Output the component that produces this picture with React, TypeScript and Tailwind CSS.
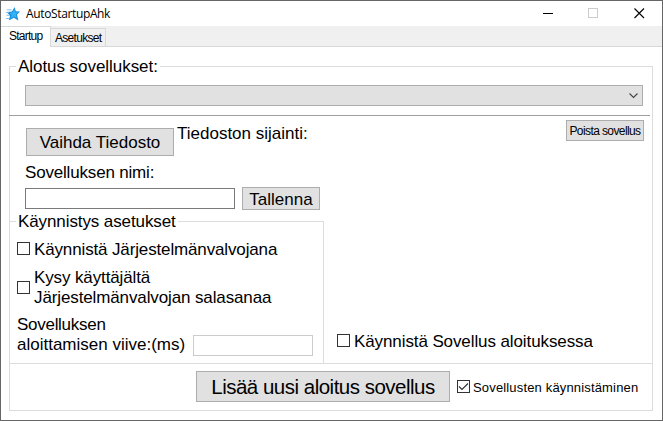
import type { ReactNode } from 'react';

function Text({ children, className = '' }: { children: ReactNode; className?: string }) {
  return <span className={`block whitespace-nowrap ${className}`}>{children}</span>;
}

function Button({ children, className = '' }: { children: ReactNode; className?: string }) {
  return (
    <button
      className={`flex shrink-0 items-center justify-center whitespace-nowrap border border-[#adadad] bg-[#e1e1e1] ${className}`}
    >
      {children}
    </button>
  );
}

function CheckBox({ checked = false, className = '' }: { checked?: boolean; className?: string }) {
  return (
    <span className={`block size-[13px] shrink-0 border border-[#333] bg-white ${className}`}>
      {checked && (
        <svg viewBox="0 0 11 11" className="size-[11px]" fill="none" stroke="#333" strokeWidth="1.2">
          <path d="M1 5.5 L4 8.5 L10 2.5" />
        </svg>
      )}
    </span>
  );
}

function Legend({ children, className = '' }: { children: ReactNode; className: string }) {
  return (
    <div className="flex h-[19px] items-center">
      <div className="h-px w-[7px] bg-[#dcdcdc]" />
      <Text className={`pl-[2px] text-[17px] leading-[19px] ${className}`}>{children}</Text>
      <div className="h-px flex-1 bg-[#dcdcdc]" />
    </div>
  );
}

function TitleBar() {
  return (
    <div className="flex h-[25px] shrink-0 items-center">
      <svg viewBox="0 0 14 14" className="ml-[5px] size-[14px]">
        <path d="M8.6 0 L9.8 4.2 L14 4.6 L11 7.8 L12.4 13.4 L7.8 10.8 L2.8 13.6 L4 8.8 L0.8 5 L6 4.4 Z" fill="#1a8fdc" />
        <path d="M8.4 2.2 L9 5.2 L12.2 5.6 L9.8 7.5 L10.6 11 L7.6 9.4 L4.6 11.4 L5.6 8.1 L3.6 5.9 L6.8 5.4 Z" fill="#35b2f5" />
        <path d="M1 2.8 H5.5 M0 5.5 H3 M0.5 8.3 H4 M0 11.5 H3.2" stroke="#6dbdeb" strokeWidth="0.9" />
      </svg>
      <Text className="ml-[6px] w-[88px] font-['Open_Sans',sans-serif] text-[12px] leading-[24px] tracking-[-0.36px]">
        AutoStartupAhk
      </Text>
      <svg viewBox="0 0 102 11" className="ml-auto mr-[17px] h-[11px] w-[102px]" fill="none" shapeRendering="crispEdges">
        <path d="M0 5.5 H10" stroke="#000" />
        <rect x="45.5" y="0.5" width="9" height="9" stroke="#ccc" />
        <path d="M91.5 0.5 L101 10 M101 0.5 L91.5 10" stroke="#000" strokeWidth="1.1" shapeRendering="auto" />
      </svg>
    </div>
  );
}

function Tabs() {
  return (
    <div className="flex h-[21px] shrink-0 items-end border-b border-[#d9d9d9] bg-[#f0f0f0] text-[12px]">
      <div className="-mb-px h-[21px] w-[50px] border-r border-t border-[#d9d9d9] bg-white pl-[8px] leading-[18px]">
        <Text className="tracking-[-0.75px]">Startup</Text>
      </div>
      <div className="h-[18px] w-[55px] border-r border-t border-[#d9d9d9] pl-[4px] leading-[18px]">
        <Text className="tracking-[-0.7px]">Asetukset</Text>
      </div>
    </div>
  );
}

export default function App() {
  return (
    <div className="flex h-[421px] w-[663px] flex-col overflow-hidden border border-[#666] bg-white font-['Liberation_Sans',Arial,sans-serif] text-[17px] leading-[20px] text-black">
      <TitleBar />
      <Tabs />
      <div className="ml-[8px] mt-[10px] w-[644px]">
        <Legend className="w-[144px] tracking-[-0.05px]">Alotus sovellukset:</Legend>
        <div className="-mt-[9px] h-[344px] border-x border-b border-[#dcdcdc]">
          <div className="flex h-[48px] flex-col pt-[18px]">
            <div className="ml-[15px] flex h-[21px] w-[618px] items-center justify-end border border-[#adadad] bg-[#e1e1e1] pr-[4px]">
              <svg viewBox="0 0 9 6" className="h-[6px] w-[9px]" fill="none" stroke="#444" strokeWidth="1.1">
                <path d="M0.5 0.5 L4.5 4.5 L8.5 0.5" />
              </svg>
            </div>
          </div>
          <div className="-ml-px h-px w-[641px] bg-[#a0a0a0]" />
          <div className="flex h-[47px] items-start">
            <Button className="ml-[16px] mt-[12px] h-[28px] w-[148px] pt-[2px]">
              <Text>Vaihda Tiedosto</Text>
            </Button>
            <Text className="ml-[3px] mt-[8px]">Tiedoston sijainti:</Text>
            <Button className="ml-auto mr-[8px] mt-[4px] h-[21px] w-[78px] text-[12px]">
              <Text className="tracking-[-0.6px]">Poista sovellus</Text>
            </Button>
          </div>
          <Text className="ml-[15px] tracking-[-0.18px]">Sovelluksen nimi:</Text>
          <div className="mt-[4px] flex h-[23px] items-center">
            <div className="ml-[15px] h-[21px] w-[210px] border border-[#7a7a7a]" />
            <Button className="ml-[7px] h-[23px] w-[78px] pt-[2px]">
              <Text>Tallenna</Text>
            </Button>
          </div>
          <div className="mt-[2px] flex h-[151px] w-full">
            <div className="-ml-px w-[315px]">
              <Legend className="w-[162px] tracking-[-0.1px]">Käynnistys asetukset</Legend>
              <div className="-mt-[9px] h-[141px] border-r border-[#dcdcdc] pl-[8px]">
                <div className="flex pt-[18px]">
                  <CheckBox className="mt-[2px]" />
                  <Text className="ml-[4px] tracking-[-0.14px]">Käynnistä Järjestelmänvalvojana</Text>
                </div>
                <div className="mt-[8px] flex items-start">
                  <CheckBox className="mt-[13px]" />
                  <Text className="ml-[4px] tracking-[-0.12px]">
                    Kysy käyttäjältä
                    <br />
                    Järjestelmänvalvojan salasanaa
                  </Text>
                </div>
                <div className="mt-[7px] flex">
                  <Text className="w-[176px]">
                    <span className="tracking-[-0.28px]">Sovelluksen</span>
                    <br />
                    aloittamisen viive:(ms)
                  </Text>
                  <div className="mt-[20px] h-[21px] w-[120px] border border-[#ccc]" />
                </div>
              </div>
            </div>
            <div className="flex items-end pb-[11px] pl-[13px]">
              <CheckBox className="mb-[5px]" />
              <Text className="ml-[4px] tracking-[-0.1px]">Käynnistä Sovellus aloituksessa</Text>
            </div>
          </div>
          <div className="flex h-[47px] items-center border-t border-[#dcdcdc] pb-px">
            <Button className="ml-[186px] h-[31px] w-[254px] text-[20.5px]">
              <Text className="tracking-[-0.5px]">Lisää uusi aloitus sovellus</Text>
            </Button>
            <CheckBox checked className="ml-[7px]" />
            <Text className="ml-[3px] pt-[2px] text-[13px] tracking-[0.16px]">Sovellusten käynnistäminen</Text>
          </div>
        </div>
      </div>
    </div>
  );
}
